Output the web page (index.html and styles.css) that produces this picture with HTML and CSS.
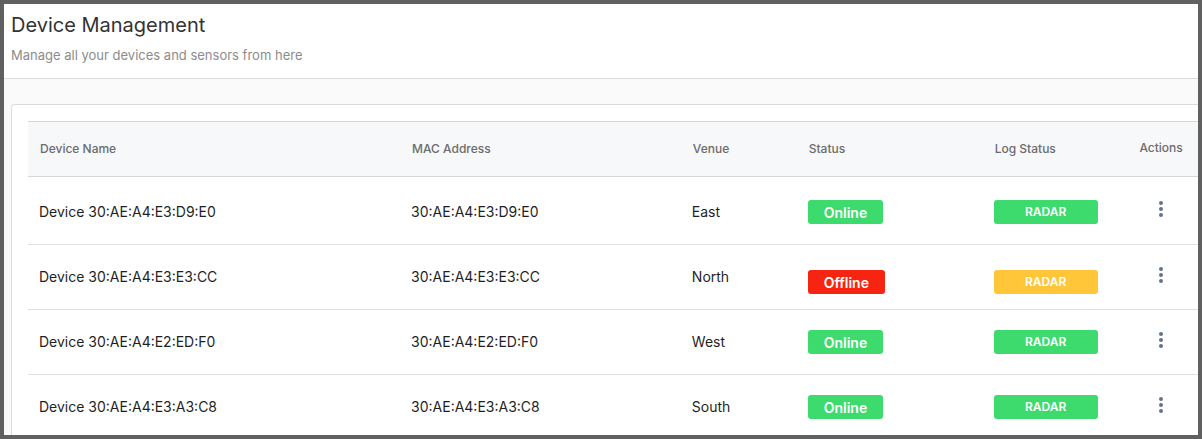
FILE: index.html
```html
<!DOCTYPE html>
<html lang="en">
<head>
<meta charset="utf-8">
<title>Device Management</title>
<link rel="stylesheet" href="styles.css">
</head>
<body>
<svg class="sprite" aria-hidden="true">
  <symbol id="dots" viewBox="0 0 4 16"><circle cx="2" cy="2" r="2"/><circle cx="2" cy="8" r="2"/><circle cx="2" cy="14" r="2"/></symbol>
</svg>
<header class="page-header">
  <h1 class="title">Device Management</h1>
  <p class="subtitle">Manage all your devices and sensors from here</p>
</header>
<main class="content">
  <section class="card">
    <table class="devices">
      <colgroup>
        <col class="col-name"><col class="col-mac"><col class="col-venue"><col class="col-status"><col class="col-log"><col class="col-actions">
      </colgroup>
      <thead>
        <tr><th>Device Name</th><th>MAC Address</th><th>Venue</th><th>Status</th><th>Log Status</th><th class="actions">Actions</th></tr>
      </thead>
      <tbody>
        <tr class="first">
          <td>Device 30:AE:A4:E3:D9:E0</td><td>30:AE:A4:E3:D9:E0</td><td>East</td>
          <td class="state"><span class="badge online">Online</span></td>
          <td class="state"><span class="badge log ok">RADAR</span></td>
          <td class="actions"><button class="menu" aria-label="Actions for East"><svg class="dots"><use href="#dots"/></svg></button></td>
        </tr>
        <tr class="alert">
          <td>Device 30:AE:A4:E3:E3:CC</td><td>30:AE:A4:E3:E3:CC</td><td>North</td>
          <td class="state"><span class="badge offline">Offline</span></td>
          <td class="state"><span class="badge log warn">RADAR</span></td>
          <td class="actions"><button class="menu" aria-label="Actions for North"><svg class="dots"><use href="#dots"/></svg></button></td>
        </tr>
        <tr>
          <td>Device 30:AE:A4:E2:ED:F0</td><td>30:AE:A4:E2:ED:F0</td><td>West</td>
          <td class="state"><span class="badge online">Online</span></td>
          <td class="state"><span class="badge log ok">RADAR</span></td>
          <td class="actions"><button class="menu" aria-label="Actions for West"><svg class="dots"><use href="#dots"/></svg></button></td>
        </tr>
        <tr>
          <td>Device 30:AE:A4:E3:A3:C8</td><td>30:AE:A4:E3:A3:C8</td><td>South</td>
          <td class="state"><span class="badge online">Online</span></td>
          <td class="state"><span class="badge log ok">RADAR</span></td>
          <td class="actions"><button class="menu" aria-label="Actions for South"><svg class="dots"><use href="#dots"/></svg></button></td>
        </tr>
      </tbody>
    </table>
  </section>
</main>
</body>
</html>
```
FILE: styles.css
```css
* { box-sizing: border-box; }

body {
  margin: 0;
  height: 100vh;
  display: flex;
  flex-direction: column;
  overflow: hidden;
  border: 4px solid #616060;
  background: #fafafa;
  color: #1f1f1f;
  font-family: Inter, "Liberation Sans", sans-serif;
  font-size: 14px;
}

.sprite { display: none; }

.page-header {
  padding: 8px 7px 14px;
  border-bottom: 1px solid #dadbdc;
  background: #fff;
}

.title {
  margin: 0 0 8px;
  color: #333;
  font-size: 20px;
  line-height: 26px;
  font-weight: 400;
}

.subtitle {
  margin: 0;
  color: #8c8c8c;
  font-size: 13px;
  line-height: 18px;
}

.content {
  flex: 1;
  min-height: 0;
  padding: 25px 0 0 7px;
}

.card {
  height: 100%;
  padding: 16px 0 0 16px;
  border: 1px solid #dadbdc;
  border-width: 1px 0 0 1px;
  border-radius: 4px 0 0 0;
  background: #fff;
}

.devices {
  width: 100%;
  table-layout: fixed;
  border-collapse: separate;
  border-spacing: 0;
}

.col-name { width: 31.8%; }
.col-mac { width: 24%; }
.col-venue { width: 9.9%; }
.col-status { width: 15.9%; }
.col-log { width: 12.1%; }
.col-actions { width: 6.3%; }

th {
  height: 56px;
  padding: 0 12px 2px;
  border: 1px solid #d5d8da;
  border-width: 1px 0;
  background: #f7f8fa;
  color: #6b6b6b;
  font-size: 12px;
  font-weight: 500;
  text-align: left;
}

td {
  height: 65px;
  padding: 0 11px 2px;
  border-bottom: 1px solid #dedfe0;
}

.state { padding-bottom: 0; }

.first td {
  height: 68px;
  padding-top: 3px;
}

.alert .state { padding-top: 9px; }

th.actions,
td.actions {
  padding: 0 0 4px;
  text-align: center;
}

.badge {
  display: block;
  width: fit-content;
  padding: 1px 16px 0;
  border-radius: 3px;
  color: #fff;
  font-size: 14px;
  line-height: 23px;
  font-weight: 600;
}

.log {
  width: 104px;
  padding: 0;
  text-align: center;
  font-size: 12px;
  line-height: 24px;
}

.online, .ok { background: #3dda6d; }
.offline { background: #f82412; }
.warn { background: #ffc63a; }

.menu {
  display: inline-flex;
  padding: 4px 8px;
  border: 0;
  background: none;
  color: #64748b;
  vertical-align: middle;
}

.dots {
  width: 4px;
  height: 16px;
  fill: currentColor;
}
```
